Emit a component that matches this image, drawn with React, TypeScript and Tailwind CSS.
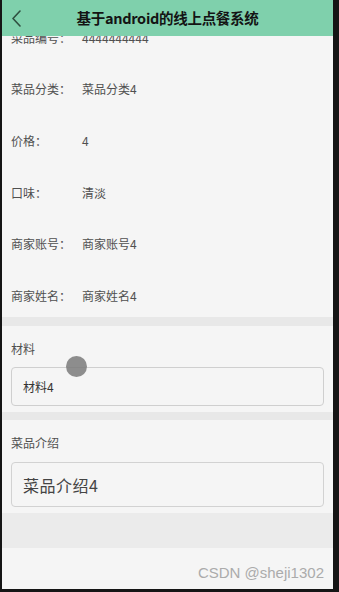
const rows = [
  { label: "菜品编号：", value: "4444444444" },
  { label: "菜品分类：", value: "菜品分类4" },
  { label: "价格：", value: "4" },
  { label: "口味：", value: "清淡" },
  { label: "商家账号：", value: "商家账号4" },
  { label: "商家姓名：", value: "商家姓名4" },
];

export default function App() {
  return (
    <div
      className="w-[339px] h-[592px] bg-[#151515] pl-[2px] pr-[6px] pb-[3px] flex"
      style={{ fontFamily: '"Noto Sans CJK SC", "Noto Sans", sans-serif' }}
    >
      <div className="relative flex-1 flex flex-col bg-[#f5f5f5] overflow-hidden">
        {/* header */}
        <div className="relative z-10 h-[36px] shrink-0 bg-[#7fd0ac] flex items-center justify-center">
          <svg className="absolute left-[9px] top-[10px]" width="12" height="17" viewBox="0 0 12 17" fill="none">
            <polyline points="9,1 2,8.5 9,16" stroke="#2f4f40" strokeWidth="1.6" strokeLinecap="round" strokeLinejoin="round" />
          </svg>
          <span className="text-[14.5px] font-bold text-[#141414] tracking-[-0.3px]">基于android的线上点餐系统</span>
        </div>

        {/* detail rows */}
        <div className="-mt-[29px]">
          {rows.map((r) => (
            <div key={r.label} className="h-[51.7px] flex items-end pb-[13px] px-[9px] text-[12px] leading-[16px] text-[#505050]">
              <span className="w-[71px] shrink-0">{r.label}</span>
              <span>{r.value}</span>
            </div>
          ))}
        </div>

        <div className="h-[9px] shrink-0 bg-[#e8e8e8]" />

        <div className="px-[9px] pt-[15px] pb-[6px]">
          <div className="text-[12px] leading-[16px] text-[#505050]">材料</div>
          <div className="mt-[10px] h-[39px] rounded-[4px] border border-[#cfcfcf] flex items-center px-[11px] text-[12px] text-[#333]">
            材料4
          </div>
        </div>

        <div className="h-[8px] shrink-0 bg-[#e8e8e8]" />

        <div className="px-[9px] pt-[15px] pb-[6px]">
          <div className="text-[12px] leading-[16px] text-[#505050]">菜品介绍</div>
          <div className="mt-[11px] h-[45px] rounded-[4px] border border-[#d2d2d2] flex items-center px-[11px] text-[16px] text-[#444] tracking-[0.5px]">
            菜品介绍4
          </div>
        </div>

        <div className="h-[35px] shrink-0 bg-[#ebebeb]" />

        <div className="flex-1 flex items-end justify-end pr-[9px] pb-[5px]">
          <span
            className="text-[15px] text-[#ababab]"
            style={{ fontFamily: '"Liberation Sans", Arial, sans-serif' }}
          >
            CSDN @sheji1302
          </span>
        </div>

        {/* touch indicator */}
        <div className="absolute left-[64px] top-[356px] w-[21px] h-[21px] rounded-full bg-[#7a7a7a]/85" />
      </div>
    </div>
  );
}
